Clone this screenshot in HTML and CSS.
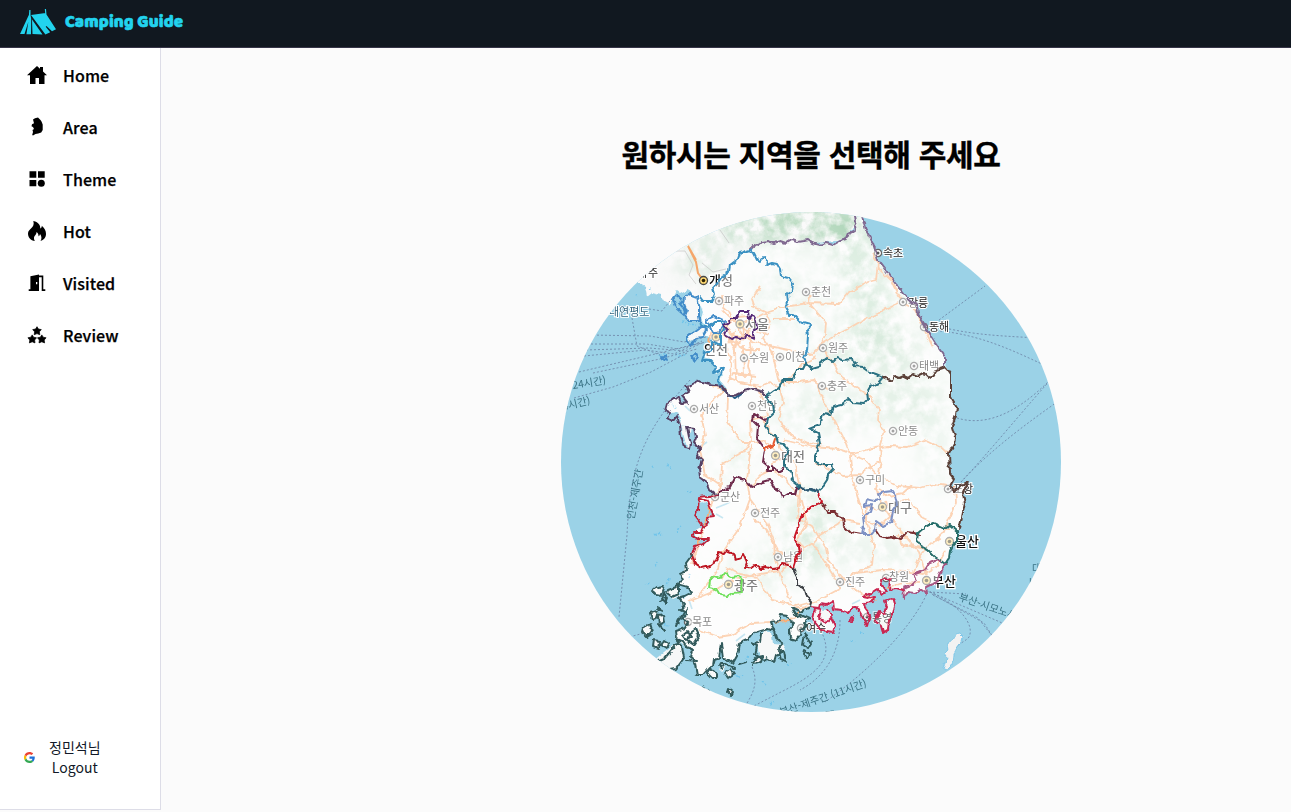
FILE: index.html
```html
<!DOCTYPE html>
<html lang="ko">
<head>
<meta charset="utf-8">
<title>Camping Guide</title>
<link rel="stylesheet" href="styles.css">
</head>
<body>
<header class="topbar">
  <svg class="tent" viewBox="19 8 38 28" fill="#22d3ee">
    <path d="M29.300 10h1.200v5l.700 4-.200 15.200h-4.600l2-12.700zM28.800 15l.300 4.500L24.500 34H20zM31 15l14.500-2L56 29.300l-4 2-5.500-5.300-.8.7 4.500 5.500-4.800 2.300zM32 19.500l10.500 15L32.500 34zM44.800 9h1.200l.500 5.500h-1.200z"/>
  </svg>
  <span class="brand">Camping Guide</span>
</header>
<div class="layout">
  <aside class="sidebar">
    <nav class="nav">
      <a class="nav-item"><svg viewBox="0 0 20 20"><path d="M0 10.200L10 1l3 2.800V2h3v4.600l4 3.600h-2.500V19H12v-6H8.500v6H3v-8.800z"/></svg><span>Home</span></a>
      <a class="nav-item"><svg viewBox="0 0 20 20"><path d="M6 2.500L8 1.200l3-.7 2.500 2.500 1 1.500 1.200 3v5.500l-1.500 2.500-3 1-2.700.5-2.500 1.500-.8-.5.800-3-.5-2 1.500-1-1-2-1.500-.800.500-2 2-1z"/></svg><span>Area</span></a>
      <a class="nav-item"><svg viewBox="0 0 20 20"><path d="M2.500 2.300h6.800v6.400H2.500zM11 2.300h6.700v6.400H11zM2.500 11h6.800v6.300H2.500z"/><circle cx="14.300" cy="14.200" r="3.500"/></svg><span>Theme</span></a>
      <a class="nav-item"><svg viewBox="0 0 20 20"><path d="M6.300 0C12 1 13.500 5 13.300 7.500c1.200-.5 1.600-1.800 1.500-2.800 3 2.500 4.200 5.200 4.200 8.300 0 3.700-2.300 6-5.500 7 1.600-2.500 1-5-.5-7-.2 1.200-.7 2-1.500 2.300.2-2-.7-3.300-2-4.300.2 3-2.500 3.500-2.500 6.300 0 1.200.400 2 1 2.700-4.500-.5-7-3.500-7-7.500C1 7.500 8.500 7 6.300 0z"/></svg><span>Hot</span></a>
      <a class="nav-item"><svg viewBox="0 0 20 20"><path fill-rule="evenodd" d="M1.700 16.300h1.700V3.300L12 1.500v1h4.300v13.800h2V18H14.700V4.200H12V18H1.700zM9 9v2.200h1.300V9z"/></svg><span>Visited</span></a>
      <a class="nav-item"><svg viewBox="0 0 20 20"><defs><path id="star" d="M0-4.300l1.400 2.300 2.900.6L2.400.800l.4 2.900L0 2.600l-2.800 1.100.4-2.900-1.900-2.200 2.900-.6z" stroke="#000" stroke-width=".7" stroke-linejoin="round"/></defs><use href="#star" x="10" y="6"/><use href="#star" x="5.200" y="14.200"/><use href="#star" x="14.800" y="14.200"/></svg><span>Review</span></a>
    </nav>
    <div class="account">
      <svg class="google" viewBox="0 0 48 48"><path fill="#EA4335" d="M24 9.500c3.500 0 6.700 1.200 9.200 3.600l6.900-6.900C35.900 2.400 30.500 0 24 0 14.600 0 6.500 5.400 2.600 13.200l8 6.200C12.400 13.700 17.700 9.500 24 9.500z"/><path fill="#1f70d8" d="M47 24.500c0-1.600-.2-3.100-.4-4.500H24v9h12.900c-.6 3-2.300 5.500-4.800 7.200l7.700 6C44.400 38 47 32 47 24.500z"/><path fill="#FBBC05" d="M10.500 28.600a14.500 14.500 0 010-9.200l-8-6.200a24 24 0 000 21.600z"/><path fill="#34A853" d="M24 48c6.500 0 11.900-2.100 15.900-5.800l-7.700-6C30 37.700 27.300 38.500 24 38.500c-6.300 0-11.600-4.200-13.500-9.900l-8 6.200C6.500 42.600 14.600 48 24 48z"/></svg>
      <div class="account-text"><span>정민석님</span><span>Logout</span></div>
    </div>
  </aside>
  <main class="content">
    <h1 class="title">원하시는 지역을 선택해 주세요</h1>
    <svg class="map" viewBox="561 212 500 500">
      <defs>
        <path id="south" d="M855 215L856 222 854 226 855 231 849 234 847 239 840 241 833 245 826 243 819 245 812 243 808 240 803 241 797 242 791 240 786 243 780 241 774 243 768 241 762 242 758 245 754 245 750 250 740 253 736 260 730 265 728 273 720 278 716 284 713 288 714 296 712 301 703 302 699 298 700 305 703 312 701 320 707 326 704 334 712 339 710 344 706 350 704 357 711 360 715 367 716 374 720 371 724 375 720 380 727 389 727 395 717 385 709 384 698 381 691 385 686 386 689 392 682 396 687 402 681 403 679 398 674 397 671 402 667 403 665 410 671 413 677 412 681 418 680 425 687 427 694 428 696 437 694 442 700 449 697 455 702 460 699 469 700 477 707 482 710 490 715 494 718 495 700 497 699 503 707 502 709 507 715 514 708 517 710 523 701 528 694 532 697 537 709 539 705 544 695 546 692 555 686 563 685 571 680 574 683 580 678 584 688 587 691 593 685 598 679 598 683 604 680 610 687 613 684 619 688 623 685 628 676 631 677 639 688 648 693 650 691 657 695 664 697 675 702 675 709 667 714 665 716 658 719 659 721 643 723 659 729 660 733 663 737 656 738 650 739 643 748 639 752 634 761 631 768 629 774 631 771 622 779 621 781 614 788 615 790 623 794 624 789 629 790 638 796 640 800 635 801 629 807 626 803 622 810 618 803 615 797 617 792 608 800 612 810 607 820 607 822 603 828 606 834 601 833 609 840 609 847 613 853 607 857 607 862 615 867 617 870 614 864 604 870 603 874 596 863 597 871 593 877 589 882 593 885 592 881 586 883 578 890 579 888 588 902 591 904 598 908 592 915 593 921 589 927 593 926 587 938 581 940 572 945 564 949 557 949 550 957 544 957 532 959 528 963 516 965 503 963 493 968 482 961 485 955 491 950 486 954 479 950 474 949 453 955 439 952 427 957 410 951 398 952 385 950 375 946 367 945 357 935 343 928 332 923 322 918 313 917 306 905 296 895 283 885 269 878 260 873 243 866 230 862 216z"/>
        <clipPath id="disc"><circle cx="811" cy="462" r="250"/></clipPath>
        <clipPath id="landclip"><use href="#south"/><path d="M561 200H862L856 222 845 240 750 250 712 301 700 302 677 290 670 305 641 282z"/></clipPath>
        <filter id="soft" x="-30%" y="-30%" width="160%" height="160%"><feGaussianBlur stdDeviation="14" result="b"/><feTurbulence type="fractalNoise" baseFrequency=".08" numOctaves="5" seed="8"/><feColorMatrix values="0 0 0 0 0 0 0 0 0 0 0 0 0 0 0 0 2.600 0 0 -.750"/><feComposite in="b" operator="in"/></filter>
        <filter id="rugged" filterUnits="userSpaceOnUse" x="561" y="212" width="500" height="500"><feTurbulence type="fractalNoise" baseFrequency=".16" numOctaves="2" seed="4" result="n"/><feDisplacementMap in="SourceGraphic" in2="n" scale="5" xChannelSelector="R" yChannelSelector="G"/></filter>
        <g id="town"><circle r="3.600" fill="#fff" stroke="#666" stroke-width="1.300"/><circle r="1.500" fill="#555"/></g>
        <g id="city"><circle r="4" fill="#ffe08a" stroke="#666" stroke-width="1.300"/><circle r="1.800" fill="#4f472c"/></g>
      </defs>
      <g clip-path="url(#disc)">
        <path fill="#9bd2e7" d="M561 212h500v500H561z"/>
        <g filter="url(#rugged)">
        <path fill="#fafafa" d="M561 200H862L856 222 845 240 750 250 712 301 700 302 694 297 688 289 680 293 677 291 671 301 671 306 664 302 660 295 652 293 647 297 645 286 638 282z"/>
        <use href="#south" fill="#fbfcfb"/>
        </g>
        <g clip-path="url(#landclip)"><g filter="url(#soft)" fill="#8cc49a">
          <ellipse cx="800" cy="222" rx="95" ry="20" opacity=".65"/><ellipse cx="866" cy="285" rx="24" ry="70" opacity=".55" transform="rotate(-18 866 285)"/><ellipse cx="870" cy="350" rx="60" ry="24" opacity=".45"/><ellipse cx="905" cy="400" rx="42" ry="28" opacity=".4"/><ellipse cx="810" cy="530" rx="24" ry="48" opacity=".55"/><ellipse cx="935" cy="450" rx="14" ry="45" opacity=".3"/><ellipse cx="820" cy="410" rx="55" ry="24" opacity=".3"/><ellipse cx="700" cy="260" rx="22" ry="16" opacity=".4"/><ellipse cx="790" cy="300" rx="40" ry="35" opacity=".25"/><ellipse cx="760" cy="570" rx="40" ry="20" opacity=".3"/><ellipse cx="880" cy="550" rx="50" ry="20" opacity=".3"/><ellipse cx="735" cy="455" rx="25" ry="30" opacity=".22"/></g></g>
        <path class="water" d="M700 447l7-5M716 508l10-4 4-2M716 514l7 4M685 406l5 5M852 604l8-4M736 641l9-7M689 600l3 9"/>
        <path class="islet" filter="url(#rugged)" d="M650 288l2 3M635 295l3 2M682 321l8 3 6 1M676 354l5 2 5-2M660 357l4-4M652 465l2 2M655 535l5-3 2 3M676 533l2-4 3-2M655 566l2-4M672 405l5 4M852 640l3 2M861 633l3 1M787 665l4-2M762 682l4 3M748 655l-3 5M733 675l6 3 4-3M669 579l-2 7M690 574l-2 4M645 585l6-2M665 623l3 3M741 665l6-4M687 491l6 3M667 465l5 3M770 704l5-2"/>
        <g class="ferry">
          <path d="M589 335L650 336 684 342 706 337M587 344L647 344 678 349 706 342M586 350L649 348 685 351 704 342M584 356L646 350 674 354 702 341M579 372L655 354 700 343M593 373L660 359 697 349M574 398L613 387 651 372 687 353M649 309L662 311 673 297M632 318L637 346 660 355M690 380C640 435 630 470 627 535L619 617M939 320L985 286M945 328C980 336 1010 336 1035 338M940 331C980 335 1012 350 1044 365M957 418C980 425 1010 420 1050 380M961 482C985 457 1030 402 1055 375M961 482C990 450 1030 421 1060 400M928 591C913 627 870 670 825 702M929 592L966 594M930 592L1000 622 1015 630M930 592C960 605 975 625 969 637 964 643 960 641 952 653M932 594L984 623 993 637M933 595L978 618 1000 646M821 631C836 660 815 675 781 692L750 708M840 620C840 660 819 680 800 690M752 667C760 685 750 698 744 708M622 639L644 633"/>
        </g>
        <path class="road-north" d="M688 246L696 262 698 273 703 280M688 246L696 260"/>
        <path class="province" d="M672 251L685 251 693 265 689 275 696 284M720 230L729 243M702 263L713 272 726 269"/>
        <g class="roads" filter="url(#rugged)">
          <path d="M722 310L728 316 738 324 750 321 763 314 784 307 809 303 839 304 849 292 868 282 876 280 878 262 872 253M809 303L810 295M809 303L826 323 825 335 820 347 812 355 765 345 748 340 738 329M760 287L752 299 755 308M751 306L765 312 770 322 763 338 772 351 778 379 786 387M773 319L794 319M822 343L846 330 858 323 892 306 899 303M878 268L891 280 898 295 905 304 916 310 924 329 933 347"/>
          <path d="M820 346L832 361 842 378 867 394 879 409 878 420 884 431 880 445 881 461 876 490 883 506 896 525 904 535 919 552 926 575M817 357L801 365 786 382 800 382 813 380 829 390 840 384M817 385L828 411 835 421 843 437 850 455 852 477 861 508 868 526 874 544 872 566 857 572"/>
          <path d="M725 344L731 358 730 378 740 382 761 386 770 382 780 389 783 402 778 419 790 435 809 444 822 443M738 338L733 356M749 337L751 350 748 365 752 383 760 392 765 404 767 415 750 421 751 440 746 450 722 464 721 486 710 508 701 535 692 563M715 350L709 345 710 334 721 332 730 319 744 327 743 340 733 346"/>
          <path d="M712 386L725 389 713 401 701 414 705 435 700 450 705 475 721 486M728 398L727 421 741 442 752 442 765 441 775 451M751 445L747 480 750 499 767 522 774 540 775 560 784 585 791 602M750 499L740 527 723 552 718 569 697 598M752 485L761 475 771 470 785 478 801 500 807 523 797 539 803 549 813 543 820 535 844 520 860 523M786 455L794 460 800 489 798 518 812 526 826 548 828 560 842 578 862 594 876 600"/>
          <path d="M784 440L812 447 839 449 853 454 874 448 888 446 907 447 924 440 949 452M814 463L823 466 843 476 860 475 870 466 882 461M850 454L865 460 877 475 898 486 920 488 934 484 947 486M879 490L888 496 903 493 912 485M955 487L956 502 948 521 945 532 930 544 919 558 913 574M878 508L908 499 923 518 930 521M813 543L841 588 819 600 797 606 772 600 757 578 740 574 728 568 721 580M842 584L855 573 882 570 905 571 923 574 937 566 945 552M808 607L792 609M688 602L712 592 730 581 760 574 778 571M699 630L718 637 731 635 752 623 790 621 807 606M781 573L790 561 778 551 767 530 753 519M899 535L901 544 912 546 925 549M937 541L945 530 950 528"/>
          <path d="M726 325L738 317 748 316 752 327 744 337 731 334zM738 324L755 339M722 334L746 350 760 350M733 320L729 311 723 306 722 295M727 383L733 373 756 376M878 510L867 506 866 521 880 526 892 515 886 501M920 583L902 582 887 588M762 418L776 438 784 457 771 464M730 340L735 350 736 380M743 345L744 378M755 330L770 335M735 330L728 345"/>
        </g>
        <g class="land" filter="url(#rugged)">
          <path d="M685 297L689 294 697 297 699 305 699 316 700 321 688 321 685 316 687 311 684 304z"/><path d="M687 335L695 332 702 327 707 330 703 338 696 338 691 341z"/><path d="M681 426L684 437 687 447 690 448 689 437 691 428z"/><path d="M893 598L895 605 893 614 889 620 888 630 883 633 881 626 880 623 876 620 880 611 884 614 887 607 886 603z"/><path d="M815 609L827 610 833 614 830 619 835 626 833 632 823 631 817 624 813 620z"/>
          <path class="tsushima" d="M960 634l3 3-1 4-5 7-4 6-1 11-5 5-4-2 4-11-2-3 3-3-1-8 6-3 3-5z"/>
          <path d="M657 587l7-1-3 9-9-3zM668 590l11-4 1 10-7 3-5-4zM650 613l7-2 1 6-6 2zM658 616l6-1 1 7-6 3zM643 628l7-4 2 7-5 6-5-5zM654 640l6 1-1 8-6-2zM664 640l5 3-3 6-5-3zM679 641l-25 20 11 11 11-2 8-14-2-10z"/><path d="M710 668l8 5 0 5-5 0-5-5zM720 664l5 3-3 4-3-3zM725 673l6-4 2 5-5 4zM753 662l5-5 5-1-3 6-6 2zM729 688l4 3-2 4-3-3zM756 642l9-12 7 5 1 9 9 1 3 5-8 5-2 6-8-3-7 0-2-9z"/>
        </g>
        <g class="labels">
          <use href="#city" x="703.500" y="280.500" class="kaesong"/><use href="#town" x="719" y="301"/><use href="#town" x="806" y="292"/><use href="#town" x="823" y="348"/><use href="#town" x="878" y="253"/><use href="#town" x="903" y="302"/><use href="#town" x="924" y="327"/><use href="#town" x="914" y="366"/><use href="#town" x="744" y="358"/><use href="#town" x="780" y="357"/><use href="#town" x="822" y="386"/><use href="#town" x="694" y="409"/><use href="#town" x="752" y="406"/><use href="#town" x="893" y="431"/><use href="#town" x="860" y="480"/><use href="#town" x="948" y="489"/><use href="#town" x="715" y="497"/><use href="#town" x="755" y="513"/><use href="#town" x="778" y="557"/><use href="#town" x="840" y="582"/><use href="#town" x="886" y="578"/><use href="#town" x="688" y="622"/><use href="#town" x="867" y="617"/><use href="#town" x="801" y="628"/>
          <use href="#city" x="740" y="324"/><use href="#city" x="716" y="337"/><use href="#city" x="775.500" y="455.500"/><use href="#city" x="882.500" y="507"/><use href="#city" x="949.500" y="541.500"/><use href="#city" x="926.500" y="580.500"/><use href="#city" x="728.500" y="584.500"/>
          <text x="648" y="277">주</text><text x="637" y="277">해</text><text x="609" y="316" class="sea">대연평도</text><text x="724" y="305">파주</text><text x="811" y="296">춘천</text><text x="828" y="352">원주</text><text x="883" y="257">속초</text><text x="908" y="307">강릉</text><text x="929" y="331">동해</text><text x="919" y="370">태백</text><text x="749" y="362">수원</text><text x="785" y="361">이천</text><text x="827" y="390">충주</text><text x="699" y="413">서산</text><text x="757" y="410">천안</text><text x="898" y="435">안동</text><text x="865" y="484">구미</text><text x="953" y="493">포항</text><text x="720" y="501">군산</text><text x="760" y="517">전주</text><text x="783" y="561">남원</text><text x="845" y="586">진주</text><text x="889" y="581">창원</text><text x="692" y="626">목포</text><text x="872" y="622" opacity=".7">통영</text><text x="806" y="632">여수</text>
          <g class="big"><text x="709" y="285">개성</text><text x="745" y="329">서울</text><text x="704" y="354">인천</text><text x="781" y="461">대전</text><text x="888" y="512">대구</text><text x="955" y="546">울산</text><text x="932" y="586">부산</text><text x="734" y="590">광주</text></g>
        </g>
        <g class="route-labels"><text transform="translate(573 389) rotate(-9)">24시간)</text><text transform="translate(560 411) rotate(-13)">(4시간)</text><text transform="translate(634 520) rotate(-80)">인천-제주간</text><text transform="translate(958 600) rotate(19)">부산-시모노세키</text><text transform="translate(781 716) rotate(-19)">부산-제주간 (11시간)</text><text x="1032" y="572">대</text><text x="1029" y="586">나</text><text x="825" y="719">제주</text></g>
        <use href="#south" fill="#fff" opacity=".46"/>
        <g class="borders" filter="url(#rugged)">
          <path stroke="#806990" d="M750 249L754 245 758 246 762 242 768 241 774 243 780 241 786 243 791 240 797 242 803 241 808 240 812 243 819 245 826 243 833 245 840 241 847 239 849 234 855 231 854 226 856 222 855 215M862 216L866 230 873 243 878 260 885 269 895 283 905 296 917 306 918 313 923 322 928 332 935 343 945 357 945 366"/>
          <path stroke="#3a91c2" d="M750 250L740 253 738 259 730 265 729 272 721 278 717 284 713 288 715 295 712 301 703 301 700 297M750 250L754 253 757 259 760 261 763 257 767 261 766 265 772 263 777 264 780 269 781 276 788 278 793 284 792 290 787 293 788 302 785 308 789 315 794 315 800 321 811 324 807 329 808 337 807 350 804 358 806 363M700 318L701 326 708 328 715 322 721 322 724 330 720 335 720 345 712 341 712 350 705 352 702 361 711 361 716 366 712 373 718 371 724 367 722 374 717 380 722 387 727 394"/>
          <path stroke="#438cc9" d="M685 297L689 294 697 297 699 305 699 316 700 321 688 321 685 316 687 311 684 304zM673 299L676 296 683 301 679 303 686 311 684 315 677 309zM687 335L695 332 702 327 706 330 702 337 696 338 691 346 687 340zM662 358L665 355 668 360zM692 356L695 353 697 357 694 361zM706 320L714 316 725 321 719 333 713 333z"/>
          <path stroke="#235b87" d="M728 396L735 398 742 393"/>
          <path stroke="#574164" d="M728 396L722 386 709 384 698 381 691 385 686 386 689 392 682 396 687 402 681 403 679 398 674 397 671 402 667 403 665 410 671 413 667 418 673 421 677 416 680 425 681 436 684 447 690 448 691 443 689 437 687 427 694 428 696 437 694 442 700 449 697 455 702 460 699 469 700 477 707 482 710 490 715 494 718 495M728 397L736 395 744 391 752 389 761 391 767 397"/>
          <path stroke="#2b7182" d="M806 363L812 369 819 367 823 360 827 357 833 362 837 358 843 360 851 359 856 363 854 366 863 367 870 372 876 374 883 377 878 383 870 387 867 392 868 400 864 404 853 403 849 399 842 405 833 407 830 415 823 414 820 425 810 429 818 433 820 443 815 455 815 462 823 465 832 465 833 469 828 474 827 481 823 487 817 492 810 489 802 490 798 485 793 481 791 470 784 467 784 460 788 449 784 444 778 443 776 436 770 433 766 427 768 418 774 412 773 404 769 402 765 396 773 390 779 388 783 380 792 380 797 369 803 369z"/>
          <path stroke="#5a4039" d="M883 377L892 381 894 376 899 378 904 376 908 378 913 374 918 376 924 373 928 377 932 378 937 370 946 367 951 374 951 398 957 408 956 415 952 427 955 437 954 444 949 453 950 474 954 479 950 486 955 491 961 485 968 482 963 493 965 503 962 517 959 528"/>
          <path stroke="#7a2f31" d="M819 503L825 506 829 512 834 512 843 518 844 526 850 532 862 534M876 530L880 536 887 538 895 537 901 539 908 532 914 533 920 535"/>
          <path stroke="#c91727" d="M818 492L821 502 811 507 804 514 800 519 797 530 794 539 799 546 800 553 797 556 793 569"/>
          <path stroke="#2d5772" d="M797 487L803 490 813 489 818 492"/>
          <path stroke="#bd1824" d="M692 555L695 564 701 568 710 566 715 562 719 553 724 554 726 551 734 554 736 560 741 558 743 553 747 562 745 568 751 567 754 565 760 569 766 567 773 569 779 568 782 563 789 564 793 569"/>
          <path stroke="#bf2039" d="M718 495L699 497 698 509 695 516 703 527 708 524 707 517 714 516 709 505 708 501 700 499M703 527L701 532 694 532 692 536 698 539 709 539 703 544 695 546 692 555"/>
          <path stroke="#6d294b" d="M718 495L722 490 730 487 735 477 741 479 746 480 751 487 759 483 770 480 775 489 781 492 783 497 788 494 795 494 797 487M765 420L754 414 753 421 758 426 757 438 765 449 763 462 768 466 768 471 773 471 773 465 777 472 783 469"/>
          <path stroke="#e65a31" d="M775 439L773 445 765 449"/>
          <path stroke="#572a78" d="M722 325L728 323 731 318 737 318 740 311 748 311 749 319 752 315 756 321 757 327 753 332 754 338 747 335 745 339 736 337 732 339 725 335 727 330z"/>
          <path stroke="#7e92c5" d="M893 491L885 492 878 494 880 499 875 501 866 499 864 506 872 505 870 512 863 517 864 524 862 534 872 534 875 530 876 521 883 526 891 522 893 511 897 505 895 495z"/>
          <path stroke="#6fe05c" d="M710 580L714 576 720 578 724 573 731 577 739 576 742 580 741 588 742 592 733 593 727 596 720 595 717 590 709 588z"/>
          <path stroke="#286e6b" d="M918 533L925 527 933 523 944 528 950 525 957 531 957 541 953 545 950 551 949 558 945 564 940 560 935 557 928 550 922 547 917 540z"/>
          <path stroke="#a95782" d="M945 564L940 572 938 581 926 587 927 593 921 589 915 593 908 592 904 598 903 588 911 585 916 580 913 575 925 570 930 562 937 559 941 562"/>
          <path stroke="#c92751" d="M903 591L896 589 889 590 890 580 885 577 881 580 882 586 886 592 882 595 877 589 871 593 863 597 868 598 874 596 873 602 864 603 866 610 870 615 867 626 862 616 857 607 853 607 848 613 840 610 834 609 833 601 826 605 820 604 819 608 810 607M893 598L895 605 893 614 889 620 888 630 883 633 881 626 875 621 880 611 884 614 887 607 884 601zM815 609L821 610 819 618 826 623 831 618 835 626 833 632 821 630 813 620zM827 610L832 616M850 620l2-2 2 2-2 2z"/>
          <path stroke="#3c4145" d="M793 569L797 577 797 584 805 590 807 597 811 601 810 607"/>
          <path stroke="#315a5b" d="M692 555L686 563 687 571 680 574 683 580 678 584 688 587 691 593 685 596 679 598 685 604 680 610 687 613 682 619 688 623 685 628 676 631 677 639 684 642 688 648 693 650 691 657 695 664 697 675 702 675 709 667 714 665 716 658 719 659 721 643 723 659 729 660 733 663 737 656 738 650 739 643 748 639 752 634 761 631 768 629 774 631 771 622 779 621 781 614 788 615 790 623 794 624 789 629 790 638 796 640 800 635 801 629 807 626 803 622 810 618 803 615 797 617 792 608 800 612 810 607M657 587l7-1-3 9-5-1-4-3zM668 590l11-4 0 8-7 3-5-4zM664 593l3 5-2 5-3-4zM650 613l7-2 1 6-6 2zM658 616l6-1 1 7-6 3zM643 628l7-4 2 7-5 6-5-5zM654 640l6 1-1 8-6-2zM664 640l5 3-3 6-5-3zM679 641l-15 18-7 3M665 671l11-2 8-11-2-11-6-7M689 634l7-5 3 7-6 9-6-4zM682 635l5-4 4 6-5 3zM709 668l8 5 0 5-5 0-5-5zM720 664l5 0-3 4-3-2zM725 673l6-4 3 5-6 4zM753 662l5-5 5-1-2 6-7 2zM729 688l4 3-2 4-3-3zM779 652l5 0 2 10-5-2zM804 650l7 4-2 5-6-5zM805 634l6 9-3 5-5-3zM701 687l8 4M713 666l1-7"/>
          <path stroke="#315a5b" d="M774 630L776 638 783 643 778 648 782 652 776 655 774 662 767 658 764 660 755 655 757 646 753 644 760 641 761 634M726 664L735 668M739 665L746 663M660 602l6-3M657 608l6 3M658 623l7 8M652 634l-5 3M687 608l-8 12M676 626l3-7M686 660l11 1"/>
        </g>
      </g>
    </svg>
  </main>
</div>
</body>
</html>
```
FILE: styles.css
```css
* { box-sizing: border-box; }
body { margin: 0; height: 812px; overflow: hidden; background: #fbfbfb; font-family: "Noto Sans CJK KR", "Noto Sans", sans-serif; color: #000; }
.topbar { display: flex; align-items: flex-start; gap: 8px; height: 48px; padding: 8px 19px; background: #111820; border-bottom: 1px solid #373548; }
.tent { width: 38px; height: 28px; }
.brand { padding-top: 1px; color: #22d3ee; font: 800 17px/27px "Baloo 2", "Lato", sans-serif; -webkit-text-stroke: .6px #22d3ee; letter-spacing: .15px; }
.layout { display: flex; height: 764px; }
.sidebar { display: flex; flex-direction: column; justify-content: space-between; width: 161px; height: 762px; background: #fff; border-right: 1px solid #dddde7; border-bottom: 1px solid #dddde7; }
.nav { display: flex; flex-direction: column; padding-top: 1px; }
.nav-item { display: flex; align-items: center; gap: 16px; height: 52px; padding-left: 27px; font-size: 16px; font-weight: 500; letter-spacing: .1px; -webkit-text-stroke: .25px #000; }
.nav-item svg { width: 20px; height: 20px; }
.account { display: flex; align-items: center; gap: 14px; padding: 0 0 32px 24px; color: #111827; font-size: 14px; line-height: 20px; }
.google { width: 11px; height: 11px; }
.account-text { display: flex; flex-direction: column; align-items: center; }
.content { flex: 1; display: flex; flex-direction: column; align-items: center; padding: 83px 0 0 170px; }
.title { margin: 0 0 36px; font-size: 30px; font-weight: 700; line-height: 45px; letter-spacing: -.3px; -webkit-text-stroke: .4px #000; }
.map { width: 500px; height: 500px; flex: none; }
.ferry path { fill: none; stroke: #718aab; stroke-width: .9; stroke-dasharray: 2 2; }
.roads path { fill: none; stroke: #faae76; stroke-width: 1.8; stroke-linejoin: round; }
.road-north { fill: none; stroke: #f5a66b; stroke-width: 2; }
.province { fill: none; stroke: #ccc; stroke-width: .8; }
.water { fill: none; stroke: #9bd2e7; stroke-width: 1.7; }
.islet { fill: none; stroke: #6fc4ea; stroke-width: 1.5; stroke-dasharray: 2 1.5; }
.land path { fill: #f7f8f8; }
.land .tsushima { stroke: #72c3e8; stroke-width: .8; fill: #f2f2f2; }
.labels text { font-size: 11px; fill: #222; stroke: #fff; stroke-width: 2; paint-order: stroke; }
.labels .sea { fill: #356780; }
.labels .big text { font-size: 13px; font-weight: 500; fill: #111; stroke-width: 2.5; }
.kaesong { filter: brightness(.85) contrast(1.4); }
.route-labels text { font-size: 10.300px; fill: #397284; }
.borders path { fill: none; stroke-width: 2; stroke-linejoin: round; stroke-linecap: round; }
```
